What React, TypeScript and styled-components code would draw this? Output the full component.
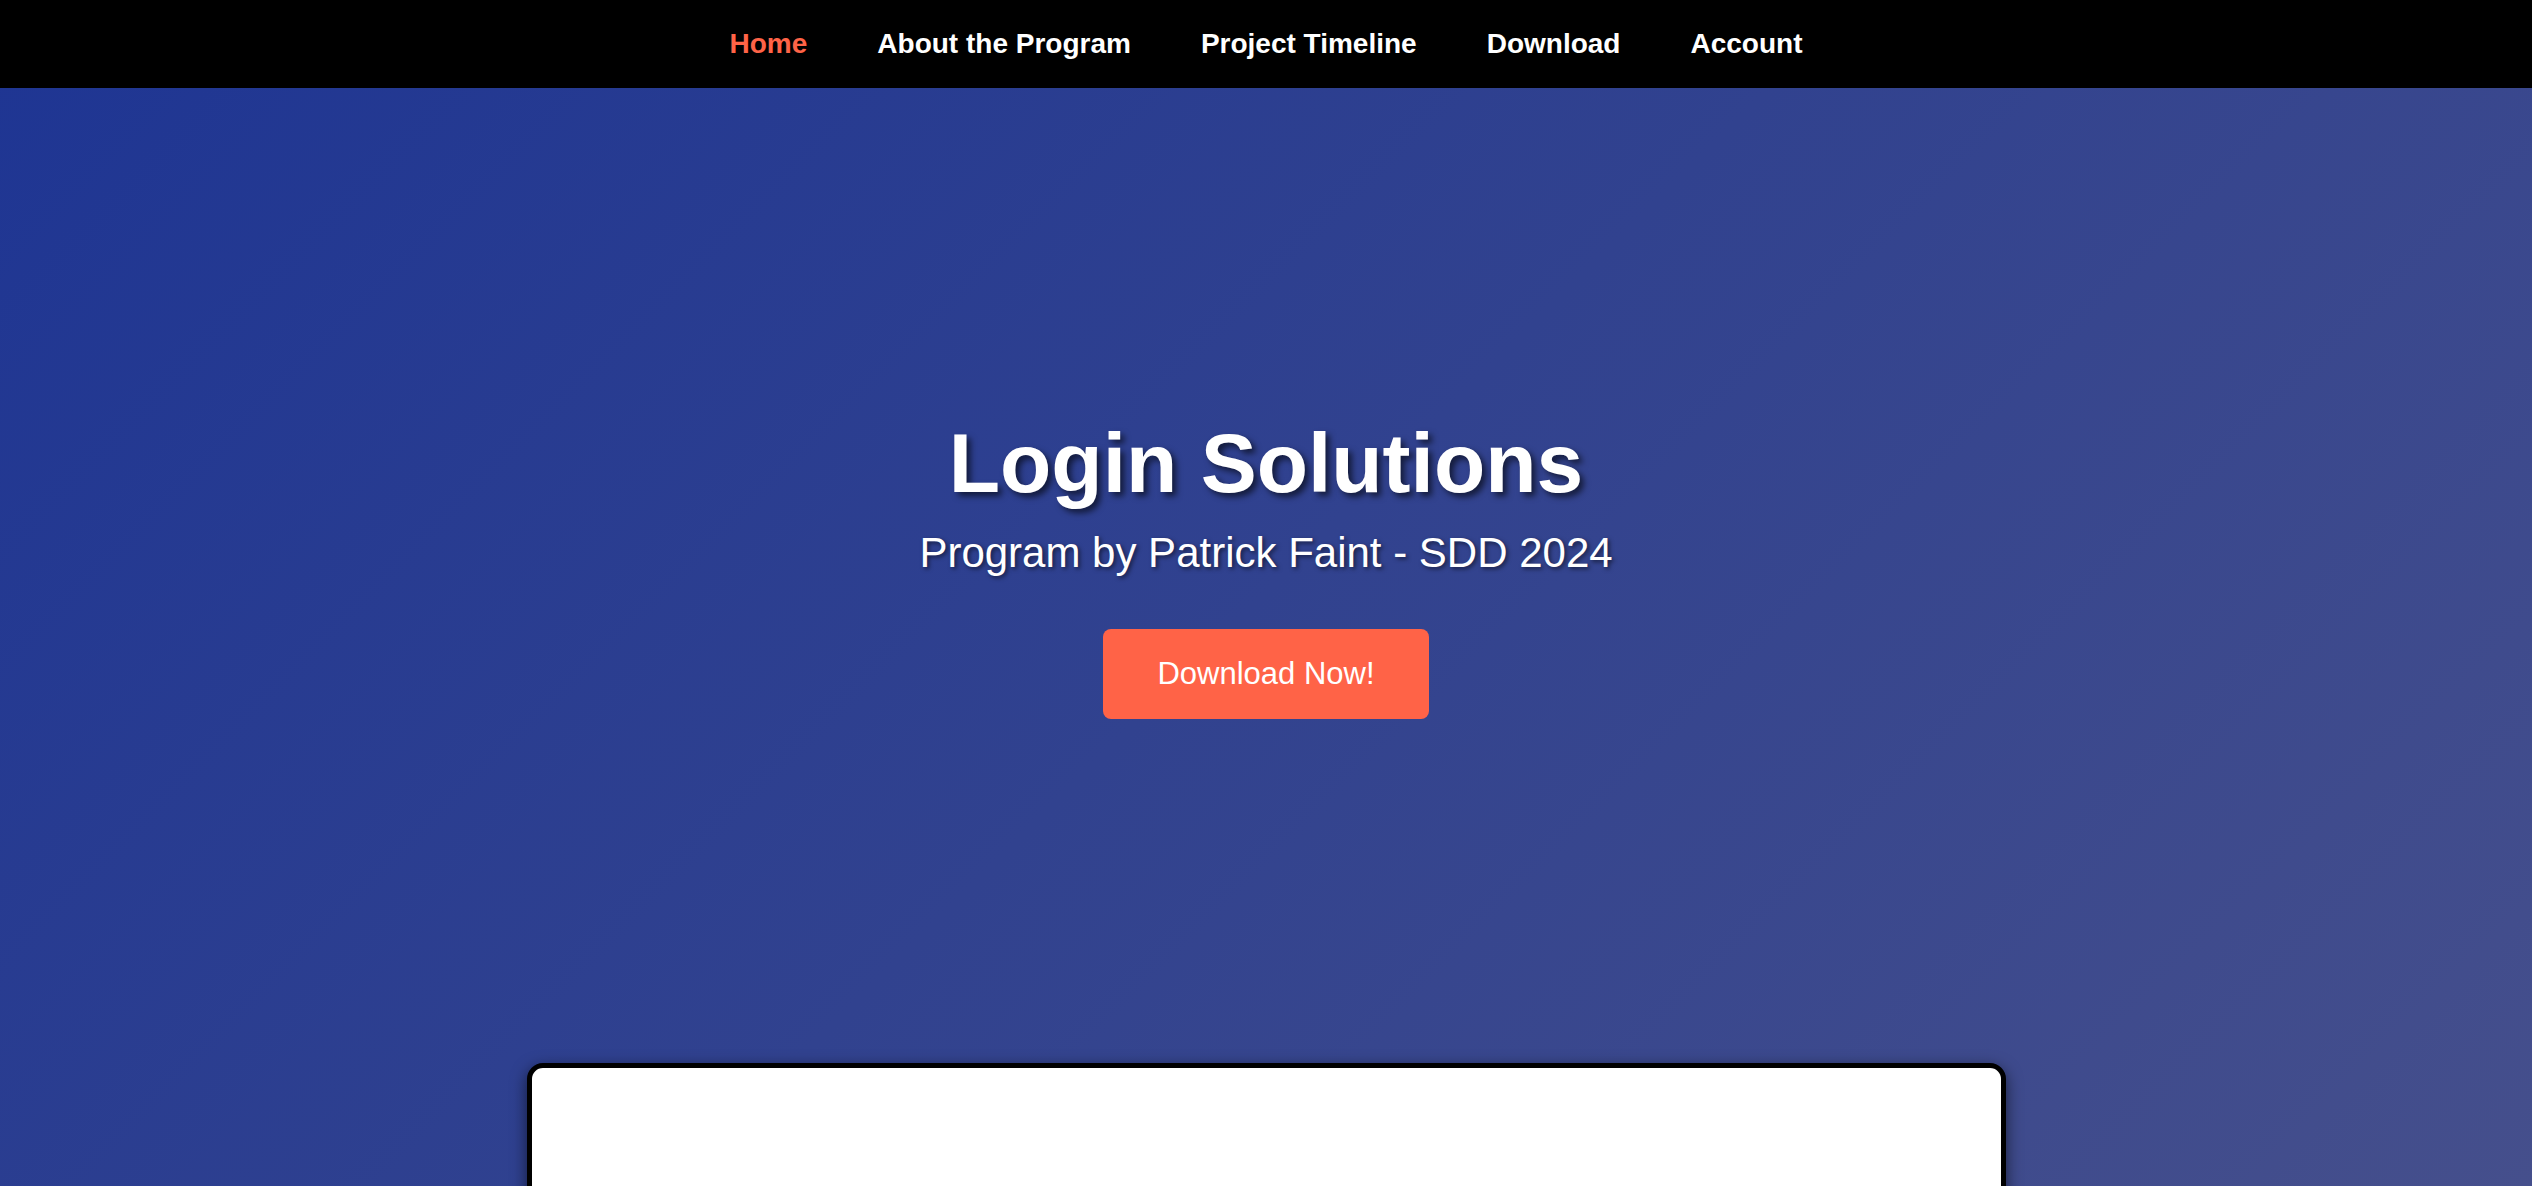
import React from "react";
import styled, { createGlobalStyle } from "styled-components";

const GlobalStyle = createGlobalStyle`
  html {
    scrollbar-width: none;
  }
  html, body {
    margin: 0;
    padding: 0;
  }
  body {
    font-family: "Liberation Sans", Arial, sans-serif;
    background: #1f3692;
  }
  * {
    box-sizing: border-box;
  }
`;

const Page = styled.div`
  min-height: 100vh;
  background: linear-gradient(135deg, #1e3593 0%, #31428f 50%, #454f8c 100%);
  background-attachment: fixed;
  font-family: "Liberation Sans", Arial, sans-serif;
  padding-bottom: 120px;
`;

const NavBar = styled.nav`
  height: 88px;
  background: #000000;
  display: flex;
  align-items: center;
  justify-content: center;
`;

const NavList = styled.ul`
  list-style: none;
  margin: 0;
  padding: 0;
  display: flex;
  gap: 70px;
`;

const NavLink = styled.a<{ $active?: boolean }>`
  font-size: 28px;
  font-weight: 700;
  line-height: normal;
  text-decoration: none;
  color: ${(p) => (p.$active ? "#ff6347" : "#ffffff")};
  cursor: pointer;
`;

const Hero = styled.header`
  display: flex;
  flex-direction: column;
  align-items: center;
  padding: 327px 0 344px;
  color: #ffffff;
  text-align: center;
`;

const Title = styled.h1`
  margin: 0;
  font-size: 84px;
  font-weight: 700;
  line-height: normal;
  text-shadow: 4px 4px 6px rgba(0, 0, 0, 0.6);
`;

const Subtitle = styled.p`
  margin: 17px 0 0;
  font-size: 42px;
  font-weight: 400;
  line-height: normal;
  text-shadow: 2px 2px 4px rgba(0, 0, 0, 0.55);
`;

const CtaButton = styled.a`
  margin-top: 52px;
  display: inline-flex;
  align-items: center;
  justify-content: center;
  width: 326px;
  height: 90px;
  background: #ff6347;
  color: #ffffff;
  font-size: 31px;
  line-height: normal;
  border-radius: 8px;
  text-decoration: none;
  cursor: pointer;
`;

const Card = styled.section`
  width: 1479px;
  min-height: 640px;
  margin: 0 auto;
  background: #ffffff;
  border: 5px solid #000000;
  border-radius: 16px;
  box-shadow: 0 5px 16px rgba(0, 0, 0, 0.6);
`;

const navItems = ["Home", "About the Program", "Project Timeline", "Download", "Account"];

export default function App() {
  return (
    <>
      <GlobalStyle />
      <Page>
        <NavBar>
          <NavList>
            {navItems.map((item, i) => (
              <li key={item}>
                <NavLink $active={i === 0}>{item}</NavLink>
              </li>
            ))}
          </NavList>
        </NavBar>
        <Hero>
          <Title>Login Solutions</Title>
          <Subtitle>Program by Patrick Faint - SDD 2024</Subtitle>
          <CtaButton>Download Now!</CtaButton>
        </Hero>
        <Card />
      </Page>
    </>
  );
}
